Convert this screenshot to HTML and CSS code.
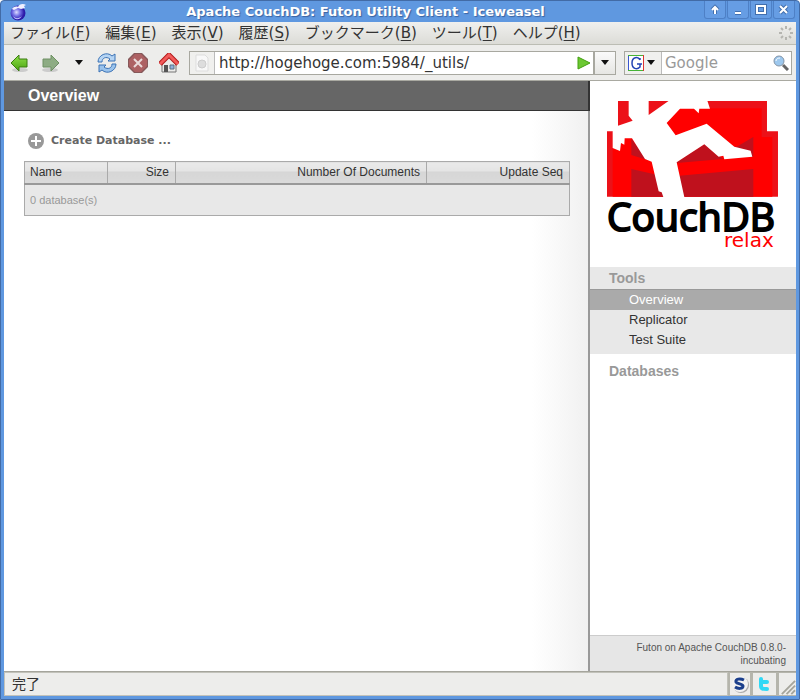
FILE: index.html
```html
<!DOCTYPE html>
<html lang="ja">
<head>
<meta charset="utf-8">
<title>Apache CouchDB: Futon Utility Client - Iceweasel</title>
<link rel="stylesheet" href="styles.css">
</head>
<body>
<div class="window">
  <header class="titlebar">
    <svg class="app-icon" viewBox="0 0 18 18" aria-hidden="true">
      <defs><radialGradient id="globe" cx=".4" cy=".45"><stop offset="0" stop-color="#dddcff"/><stop offset=".5" stop-color="#7470e6"/><stop offset="1" stop-color="#2c1aa8"/></radialGradient></defs>
      <circle cx="9" cy="10" r="7.5" fill="url(#globe)"/>
      <path d="M3 6c1-2 4-3 6-2 1-3 5-4 8-2l-2 1 1 2-4 1-3-1-4 2z" fill="#f1f0ff"/>
      <path d="M4 12c1 4 6 4 9 1-2 4-8 5-9-1z" fill="#c5c4ff"/>
    </svg>
    <h1 class="window-title">Apache CouchDB: Futon Utility Client - Iceweasel</h1>
    <div class="window-buttons">
      <button aria-label="Shade"><svg viewBox="0 0 12 12"><path class="halo" d="M6 10V3M3 6l3-3 3 3"/><path d="M6 10V3M3 6l3-3 3 3"/></svg></button>
      <button aria-label="Minimize"><svg viewBox="0 0 12 12"><path class="halo" d="M3 9h6"/><path d="M3 9h6"/></svg></button>
      <button aria-label="Maximize"><svg viewBox="0 0 12 12"><path class="halo" d="M2 2h8v7H2z"/><path d="M2 2h8v7H2z"/></svg></button>
      <button aria-label="Close"><svg viewBox="0 0 12 12"><path class="halo" d="M2 2l7 7M9 2l-7 7"/><path d="M2 2l7 7M9 2l-7 7"/></svg></button>
    </div>
  </header>

  <nav class="menubar">
    <button>ファイル(<u>F</u>)</button>
    <button>編集(<u>E</u>)</button>
    <button>表示(<u>V</u>)</button>
    <button>履歴(<u>S</u>)</button>
    <button>ブックマーク(<u>B</u>)</button>
    <button>ツール(<u>T</u>)</button>
    <button>ヘルプ(<u>H</u>)</button>
    <svg class="throbber" viewBox="0 0 14 14" aria-hidden="true">
      <path d="M7 0v3M7 11v3M0 7h3M11 7h3M2 2l2 2M10 10l2 2M12 2l-2 2M4 10l-2 2"/>
    </svg>
  </nav>

  <div class="toolbar">
    <button class="tool" aria-label="Back"><svg viewBox="0 0 20 20">
      <defs><linearGradient id="leaf" x2="0" y2="1"><stop offset="0" stop-color="#8fe04a"/><stop offset="1" stop-color="#4aa310"/></linearGradient></defs>
      <ellipse cx="11" cy="17" rx="8" ry="2" fill="#ccc"/>
      <path d="M2 10l8-8v4h8v8h-8v4z" fill="url(#leaf)" stroke="#3b7d10"/></svg></button>
    <button class="tool" aria-label="Forward"><svg viewBox="0 0 20 20">
      <defs><pattern id="stipple" width="2" height="2" patternUnits="userSpaceOnUse"><path d="M0 0h1v1H0zM1 1h1v1H1z" fill="#8fa38b"/></pattern></defs>
      <ellipse cx="9" cy="17" rx="8" ry="2" fill="#ccc"/>
      <path d="M18 10l-8-8v4H2v8h8v4z" fill="#8cb57c"/><path d="M18 10l-8-8v4H2v8h8v4z" fill="url(#stipple)" stroke="#6f9065"/></svg></button>
    <button class="tool tool-arrow" aria-label="History"><svg viewBox="0 0 10 6"><path d="M1 0h8L5 5z" fill="#111"/></svg></button>
    <button class="tool" aria-label="Reload"><svg viewBox="0 0 20 20">
      <path d="M1 9c0-7 9-11 14-6l3-2v7h-7l2-2C9 3 5 5 5 9z" fill="#b5d4f3" stroke="#3b72b5"/>
      <path d="M19 11c0 7-9 11-14 6l-3 2v-7h7l-2 2c4 3 8 1 8-3z" fill="#9ac3ec" stroke="#3b72b5"/></svg></button>
    <button class="tool tool-stop" aria-label="Stop"><svg viewBox="0 0 20 20">
      <path d="M6 0h8l6 6v8l-6 6H6l-6-6V6z" fill="#86595a"/><path d="M7 1h6l6 6v6l-6 6H7l-6-6V7z" fill="#ad6163"/>
      <path d="M6 6l8 8M14 6l-8 8" stroke="#eadada" stroke-width="2"/></svg></button>
    <button class="tool" aria-label="Home"><svg viewBox="0 0 20 20">
      <path d="M3 9v10h14V9l-7-6z" fill="#ececea" stroke="#777"/>
      <path d="M5 12h4v7H5z" fill="#555"/><path d="M11 12h4v4h-4z" fill="#8db2dd" stroke="#5d6e82"/>
      <path d="M1 11l9-9 9 9" fill="none" stroke="#b11b1b" stroke-width="5"/><path d="M1 11l9-9 9 9" fill="none" stroke="#f25a5a" stroke-width="3"/></svg></button>

    <div class="address">
      <div class="field">
        <span class="site-icon"><svg viewBox="0 0 16 18"><path d="M2 1h9l3 3v13H2z" fill="#f8f8f8" stroke="#ddd"/><circle cx="8" cy="10" r="4" fill="#ddd" stroke="#ccc"/></svg></span>
        <input class="url" type="text" aria-label="Address" value="http://hogehoge.com:5984/_utils/">
        <button class="go" aria-label="Go"><svg viewBox="0 0 14 14"><path d="M1 1l12 6-12 6z" fill="#6cc832" stroke="#44a010"/></svg></button>
      </div>
      <button class="drop" aria-label="Show addresses"><svg viewBox="0 0 10 6"><path d="M1 0h8L5 5z" fill="#111"/></svg></button>
    </div>

    <div class="field search">
      <button class="engine" aria-label="Search engine">
        <svg class="engine-icon" viewBox="0 0 16 16"><path d="M0 0h16v16H0z" fill="#fff"/><path d="M0 16V0" stroke="#3a57d0" stroke-width="2"/><path d="M0 0h16M0 16h16" stroke="#46b336" stroke-width="2"/><path d="M16 0v16" stroke="#d33" stroke-width="2"/>
          <path d="M12 5V3M12 5C10 1 4 2 4 8s5 7 8 4V9M9 9h5" fill="none" stroke="#2444b4" stroke-width="1.5"/></svg>
        <svg class="caret" viewBox="0 0 10 6"><path d="M1 0h8L5 5z" fill="#111"/></svg>
      </button>
      <input class="query" type="text" aria-label="Search" placeholder="Google">
      <button class="go" aria-label="Search"><svg class="lens" viewBox="0 0 16 16"><path d="M10 10l5 5" stroke="#666" stroke-width="3"/><circle cx="6" cy="6" r="5" fill="#9dc8ee" stroke="#8494a6"/><path d="M3 6c0-2 2-3 4-3" stroke="#fff" fill="none"/></svg></button>
    </div>
  </div>

  <div class="page">
    <main class="content">
      <h2 class="page-title">Overview</h2>
      <div class="page-body">
        <button class="create"><svg viewBox="0 0 16 16"><circle cx="8" cy="8" r="8" fill="#999"/><path d="M8 3v10M3 8h10" stroke="#fff" stroke-width="2"/></svg>Create Database ...</button>
        <table class="databases">
          <colgroup><col class="col-name"><col class="col-size"><col class="col-count"><col class="col-seq"></colgroup>
          <thead><tr><th>Name</th><th>Size</th><th>Number Of Documents</th><th>Update Seq</th></tr></thead>
          <tbody><tr><td colspan="4">0 database(s)</td></tr></tbody>
        </table>
      </div>
    </main>

    <aside class="sidebar">
      <a class="logo" href="#" aria-label="CouchDB">
        <svg viewBox="0 0 171 166">
          <g transform="scale(.3333) translate(-51 -46)">
            <path fill="#ec1118" d="M84 46H531V137H564V333H51V137H84z"/>
            <path fill="#f00" d="M240 68H515V154H547V333H68V150H128z"/>
            <path fill="#bf111d" d="M124 158L170 222L124 208zM255 233L343 175L400 220L260 232zM425 183L440 183L490 154V213H425zM124 250L200 267L260 271L490 250V333H124z"/>
            <path fill="#fff" d="M116 45V90L128 105L84 120L68 137V187L90 196L93 172L103 177L104 158H126L165 220L185 228L206 317L215 320L220 334H283L260 230L343 176L386 213L400 210L403 221L487 213L482 195L433 183L350 114L257 149L230 112L270 69H312L326 83L328 69H360L352 45H237L176 88V45z"/>
          </g>
          <text class="logo-name" x="0" y="130">CouchDB</text>
          <text class="logo-tag" x="117" y="146">relax</text>
        </svg>
      </a>
      <nav class="tools">
        <h3>Tools</h3>
        <ul>
          <li><a class="current" href="#">Overview</a></li>
          <li><a href="#">Replicator</a></li>
          <li><a href="#">Test Suite</a></li>
        </ul>
      </nav>
      <h3 class="databases-title">Databases</h3>
      <p class="version">Futon on Apache CouchDB 0.8.0-incubating</p>
    </aside>
  </div>

  <footer class="statusbar">
    <span class="status">完了</span>
    <span class="panel"><svg viewBox="0 0 18 18"><circle cx="10" cy="10" r="8" fill="#aaa"/><circle cx="9" cy="9" r="8" fill="#f2f2f2"/><path d="M13 5C9 3 4 4 5 7c1 2 7 2 7 4 0 3-5 3-8 1" fill="none" stroke="#1b3f8c" stroke-width="3"/></svg></span>
    <span class="panel panel-wide"><svg viewBox="0 0 18 18"><path d="M6 4v7c0 3 2 3 6 3M6 7h6" fill="none" stroke="#2fd8f5" stroke-width="4" stroke-linecap="round"/></svg></span>
    <span class="panel grip"><svg viewBox="0 0 18 18"><path d="M3 17L17 3M8 17l9-9M13 17l4-4" stroke="#a5a59c" stroke-width="2"/></svg></span>
  </footer>
</div>
</body>
</html>
```

FILE: styles.css
```css
* { box-sizing: border-box; }

body {
  margin: 0;
  font-family: "Liberation Sans", sans-serif;
  color: #333;
}

button, input {
  margin: 0;
  padding: 0;
  border: 0;
  background: none;
  font: inherit;
  color: inherit;
}

svg { display: block; }

.window {
  display: flex;
  flex-direction: column;
  min-height: 100vh;
  padding: 0 3px 3px;
  border: 1px solid #426ba6;
  border-radius: 4px 4px 0 0;
  background: #5f98e0;
}

/* Window title */
.titlebar {
  display: flex;
  align-items: center;
  height: 21px;
  padding: 0 1px 0 5px;
}

.app-icon { width: 18px; height: 18px; }

.window-title {
  flex: 1;
  margin: 0;
  text-align: center;
  font: bold 13px/21px "DejaVu Sans", sans-serif;
  color: #fff;
  text-shadow: 1px 1px 1px #3a62a0;
}

.window-buttons { display: flex; align-self: flex-start; gap: 1px; }

.window-buttons button {
  width: 22px;
  height: 18px;
  padding: 3px 4px;
  border: 1px solid #4e80c6;
  border-top: 0;
  border-radius: 0 0 3px 3px;
  background: #669de4;
}

.window-buttons svg { width: 12px; height: 12px; }
.window-buttons path { fill: none; stroke: #fff; stroke-width: 2; }
.window-buttons .halo { stroke: #426fae; stroke-width: 4; }

/* Menus */
.menubar {
  display: flex;
  align-items: center;
  gap: 15px;
  height: 23px;
  padding: 0 3px 0 6px;
  border-bottom: 1px solid #bcbdb4;
  background: linear-gradient(#f0f0ee, #dcdcd7);
  font: 15px/22px "DejaVu Sans", "Noto Sans CJK JP", sans-serif;
  white-space: nowrap;
}

.menubar u { text-underline-offset: 2px; }
.throbber { width: 14px; height: 14px; margin-left: auto; stroke: #b5b5b0; stroke-width: 2; }

/* Navigation */
.toolbar {
  display: flex;
  align-items: center;
  gap: 10px;
  height: 36px;
  padding: 0 4px 0 5px;
  border-bottom: 1px solid #a9a9a1;
  background: #ededeb;
  font: 15px/22px "DejaVu Sans", sans-serif;
}

.tool svg { width: 20px; height: 20px; }
.tool:first-child { margin-right: 2px; }
.tool-arrow { padding: 0 3px; }
.tool-arrow svg, .drop svg, .caret { width: 10px; height: 6px; }
.tool-stop { margin: 0 1px; }

.address { display: flex; flex: 1; min-width: 0; }

.field {
  display: flex;
  flex: 1;
  align-items: stretch;
  min-width: 0;
  height: 24px;
  border: 1px solid #a8a8a0;
  background: #fff;
}

.site-icon {
  display: flex;
  align-items: center;
  padding: 0 4px;
  border-right: 1px solid #bbb;
  background: #f0f0ee;
}

.site-icon svg { width: 16px; height: 18px; }

.url, .query { flex: 1; width: 0; min-width: 0; padding: 0 4px; outline: 0; }
.query { padding: 0 3px; }
.query::placeholder { color: #999; opacity: 1; }

.go { padding: 0 2px; }
.go svg { width: 14px; height: 14px; }
.go .lens { width: 16px; height: 16px; }

.drop {
  width: 22px;
  padding: 0 5px;
  border: 1px solid #a8a8a0;
  background: linear-gradient(#fafafa, #e6e6e3);
}

.search { flex: 0 0 168px; margin-left: -2px; }

.engine {
  display: flex;
  align-items: center;
  gap: 2px;
  padding: 0 5px 0 3px;
  border-right: 1px solid #bbb;
  background: #f0f0ee;
}

.engine-icon { width: 16px; height: 16px; }

/* Page */
.page { display: flex; flex: 1; background: #fff; }

.content {
  flex: 1;
  min-width: 0;
  border-right: 2px solid #999;
  background: linear-gradient(to left, #f0f0f0, #f6f6f6 20px, #fff 56px);
}

.page-title {
  margin: 0 -2px 0 0;
  padding: 0 24px;
  border: solid #333;
  border-width: 0 2px 1px 0;
  background: #666;
  font-size: 16px;
  line-height: 29px;
  color: #fff;
}

.page-body { padding: 22px 18px 0 20px; }

.create {
  display: flex;
  align-items: center;
  gap: 7px;
  margin: 0 0 12px 4px;
  font: bold 11px/16px "DejaVu Sans", sans-serif;
  color: #666;
}

.create svg { width: 16px; height: 16px; }

.databases {
  width: 100%;
  border: 1px solid #aaa;
  border-collapse: collapse;
  table-layout: fixed;
  background: #e8e8e8;
}

.col-name { width: 83px; }
.col-size { width: 68px; }
.col-seq { width: 143px; }

.databases th {
  padding: 0 6px;
  border-right: 1px solid #aaa;
  border-bottom: 2px solid #999;
  background: linear-gradient(#eaeaea, #e4e4e4 45%, #d6d6d6 45%, #dadada);
  font-size: 12px;
  font-weight: normal;
  line-height: 21px;
  text-align: right;
}

.databases th:first-child { padding-left: 5px; text-align: left; }

.databases td {
  padding: 0 5px;
  font-size: 11px;
  line-height: 30px;
  color: #999;
}

/* Sidebar */
.sidebar {
  display: flex;
  flex: 0 0 206px;
  flex-direction: column;
}

.logo { padding: 20px 18px 0 17px; }
.logo svg { width: 171px; height: 166px; }

.logo-name {
  font: 39px "Open Sans", sans-serif;
  fill: #000;
  stroke: #000;
  stroke-width: 2px;
}

.logo-tag { font: 20px "DejaVu Sans", sans-serif; fill: #f00; }

.sidebar h3 {
  margin: 0;
  padding: 0 19px;
  font-size: 14px;
  line-height: 22px;
  color: #999;
}

.tools { padding-bottom: 4px; background: #e8e8e8; }
.tools ul { margin: 0; padding: 0; list-style: none; }

.tools a {
  display: block;
  padding: 0 39px;
  font-size: 13px;
  line-height: 20px;
  color: #333;
  text-decoration: none;
}

.tools .current {
  border-top: 1px solid #999;
  background: #aaa;
  color: #fff;
}

.sidebar .databases-title { padding-top: 6px; }

.version {
  margin: auto 0 0;
  padding: 5px 10px 4px 30px;
  border-top: 1px solid #ccc;
  background: #e6e6e6;
  font-size: 10px;
  line-height: 13px;
  text-align: right;
  color: #555;
}

/* Status */
.statusbar {
  display: flex;
  height: 25px;
  border-top: 1px solid #a5a59c;
  background: #ededeb;
  font: 14px/22px "DejaVu Sans", "Noto Sans CJK JP", sans-serif;
}

.status { flex: 1; padding-left: 7px; border: 1px solid #c2c2ba; }

.panel {
  display: flex;
  align-items: center;
  padding: 0 1px;
  border: 1px solid #b5b5ac;
  border-left-width: 2px;
}

.panel svg { width: 18px; height: 18px; }
.panel-wide { padding: 0 3px 0 2px; }
.panel.grip { padding: 4px 0 0; border-right: 0; }
.panel.grip svg { width: 17px; height: 17px; }
```
